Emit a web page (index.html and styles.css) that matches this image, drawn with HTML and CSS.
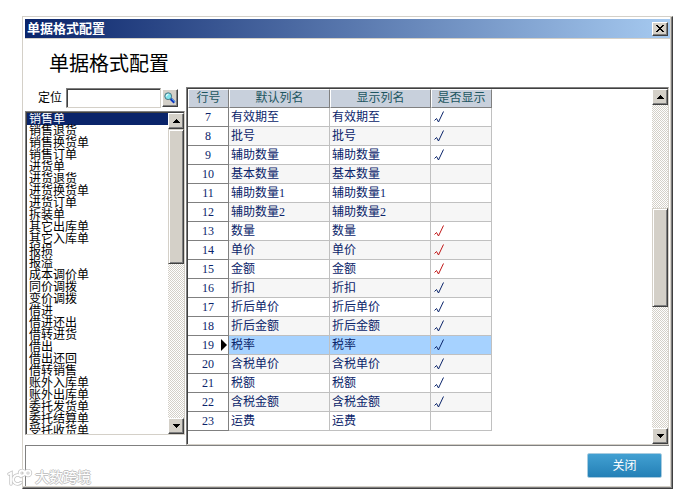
FILE: index.html
```html
<!DOCTYPE html>
<html lang="zh-CN">
<head>
    <meta charset="UTF-8">
    <meta name="viewport" content="width=device-width, initial-scale=1.0">
    <title>单据格式配置</title>
    <link rel="stylesheet" href="styles.css">
</head>
<body>

    <div class="window">
        <div class="titlebar">
            <span class="titlebar-text">单据格式配置</span>
            <button class="btn-3d btn-close" type="button" aria-label="关闭窗口">
                <svg width="8" height="7" viewBox="0 0 8 7" shape-rendering="crispEdges"><path d="M0 0h2v1h1v1h2v-1h1v-1h2v1h-1v1h-1v1h-1v1h1v1h1v1h1v1h-2v-1h-1v-1h-2v1h-1v1h-2v-1h1v-1h1v-1h1v-1h-1v-1h-1v-1h-1z"/></svg>
            </button>
        </div>

        <h1>单据格式配置</h1>

        <div class="content">
            <!-- 单据类型 -->
            <div class="sidebar">
                <div class="search">
                    <label for="locate">定位</label>
                    <input type="text" id="locate">
                    <button class="btn-3d btn-search" type="button" aria-label="查找">
                        <svg width="12" height="12" viewBox="0 0 12 12">
                            <path d="M6.5 6.5l4 4" stroke="#1030c0" stroke-width="2.6"/>
                            <path d="M7.5 6.6l3.6 3.6" stroke="#5ad0f0" stroke-width="0.8"/>
                            <circle cx="4.2" cy="4.2" r="3.4" fill="#7fe4ec" stroke="#4a7480"/>
                            <path d="M2.4 4.4a2 2 0 0 1 2-2" stroke="#fff" fill="none"/>
                        </svg>
                    </button>
                </div>
                <div class="listbox">
                    <ul class="bill-list" role="listbox" tabindex="0" aria-label="单据类型">
                        <li role="option" aria-selected="true">销售单</li>
                        <li role="option">销售退货</li>
                        <li role="option">销售换货单</li>
                        <li role="option">销售订单</li>
                        <li role="option">进货单</li>
                        <li role="option">进货退货</li>
                        <li role="option">进货换货单</li>
                        <li role="option">进货订单</li>
                        <li role="option">拆装单</li>
                        <li role="option">其它出库单</li>
                        <li role="option">其它入库单</li>
                        <li role="option">报损</li>
                        <li role="option">报溢</li>
                        <li role="option">成本调价单</li>
                        <li role="option">同价调拨</li>
                        <li role="option">变价调拨</li>
                        <li role="option">借进</li>
                        <li role="option">借进还出</li>
                        <li role="option">借转进货</li>
                        <li role="option">借出</li>
                        <li role="option">借出还回</li>
                        <li role="option">借转销售</li>
                        <li role="option">账外入库单</li>
                        <li role="option">账外出库单</li>
                        <li role="option">委托发货单</li>
                        <li role="option">委托结算单</li>
                        <li role="option">受托收货单</li>
                    </ul>
                    <div class="scrollbar list-scroll">
                        <button class="btn-3d" type="button" aria-label="向上"><svg width="7" height="4" viewBox="0 0 7 4" shape-rendering="crispEdges"><path d="M3 0h1v1h1v1h1v1h1v1H0V3h1V2h1V1h1z"/></svg></button>
                        <div class="thumb"></div>
                        <div class="space-after"></div>
                        <button class="btn-3d" type="button" aria-label="向下"><svg width="7" height="4" viewBox="0 0 7 4" shape-rendering="crispEdges"><path d="M0 0h7v1H6v1H5v1H4v1H3V3H2V2H1V1H0z"/></svg></button>
                    </div>
                </div>
            </div>

            <!-- 列配置 -->
            <div class="grid-panel">
                <div class="grid-view">
                    <table class="grid">
                        <thead>
                            <tr>
                                <th class="col-num">行号</th>
                                <th class="col-name">默认列名</th>
                                <th class="col-name">显示列名</th>
                                <th class="col-show">是否显示</th>
                            </tr>
                        </thead>
                        <tbody id="rows"></tbody>
                    </table>
                </div>
                <div class="scrollbar grid-scroll">
                    <button class="btn-3d" type="button" aria-label="向上"><svg width="7" height="4" viewBox="0 0 7 4" shape-rendering="crispEdges"><path d="M3 0h1v1h1v1h1v1h1v1H0V3h1V2h1V1h1z"/></svg></button>
                    <div class="space-before"></div>
                    <div class="thumb"></div>
                    <div class="space-after"></div>
                    <button class="btn-3d" type="button" aria-label="向下"><svg width="7" height="4" viewBox="0 0 7 4" shape-rendering="crispEdges"><path d="M0 0h7v1H6v1H5v1H4v1H3V3H2V2H1V1H0z"/></svg></button>
                </div>
            </div>
        </div>

        <div class="footer">
            <button class="btn-primary" type="button">关闭</button>
        </div>
    </div>

    <div class="watermark">
        <svg width="26" height="18" viewBox="0 0 26 18" fill="none" stroke-linecap="round">
            <g stroke="#c4c4c4" stroke-width="3.4">
                <path d="M2 5l2-1v11"/>
                <path d="M14 7.500a4.500 4.500 0 1 0 0 6"/>
                <circle cx="15" cy="4" r="2.500"/>
                <circle cx="21" cy="4" r="2.500"/>
            </g>
            <g stroke="#fff" stroke-width="1.800">
                <path d="M2 5l2-1v11"/>
                <path d="M14 7.500a4.500 4.500 0 1 0 0 6"/>
                <circle cx="15" cy="4" r="2.500"/>
                <circle cx="21" cy="4" r="2.500"/>
            </g>
        </svg>
        <span>大数跨境</span>
    </div>

    <script>
        // 行号, 列名, 是否显示 (required = 必选列)
        const columns = [
            [7, "有效期至", "on"],
            [8, "批号", "on"],
            [9, "辅助数量", "on"],
            [10, "基本数量", ""],
            [11, "辅助数量1", ""],
            [12, "辅助数量2", ""],
            [13, "数量", "required"],
            [14, "单价", "required"],
            [15, "金额", "required"],
            [16, "折扣", "on"],
            [17, "折后单价", "on"],
            [18, "折后金额", "on"],
            [19, "税率", "on"],
            [20, "含税单价", "on"],
            [21, "税额", "on"],
            [22, "含税金额", "on"],
            [23, "运费", ""]
        ];
        const current = 19;

        const rows = document.getElementById("rows");
        columns.forEach(([num, name, state]) => {
            const check = state
                ? `<svg class="check ${state}" width="11" height="12" viewBox="0 0 11 12"><path d="M0.500 9.500l2-2 2 3.500 5-10.500"/></svg>`
                : "";
            rows.insertAdjacentHTML("beforeend", `
                <tr class="${num === current ? "current" : ""}">
                    <th class="row-num" scope="row">${num}</th>
                    <td>${name}</td>
                    <td>${name}</td>
                    <td>${check}</td>
                </tr>
            `);
        });

        // 点击选择单据
        const bills = document.querySelectorAll(".bill-list li");
        bills.forEach(bill => {
            bill.addEventListener("click", () => {
                bills.forEach(b => b.removeAttribute("aria-selected"));
                bill.setAttribute("aria-selected", "true");
            });
        });
    </script>

</body>
</html>
```
FILE: styles.css
```css
* {
    box-sizing: border-box;
}
body {
    margin: 0;
    padding: 16px 4px 3px 22px;
    height: 100vh;
    min-height: 492px;
    display: flex;
    flex-direction: column;
    background-color: #fff;
    font-family: "Liberation Serif", "Noto Sans CJK SC", serif;
    font-size: 12px;
    color: #000;
}
button,
input {
    font: inherit;
    margin: 0;
    padding: 0;
    border-radius: 0;
}
svg {
    display: block;
}
.window {
    flex: 1;
    min-height: 0;
    display: flex;
    flex-direction: column;
    padding: 1px;
    border: 1px solid;
    border-color: #d4d0c8 #404040 #404040 #d4d0c8;
    box-shadow: inset -1px -1px #808080, inset -2px -2px #d4d0c8;
}

/* 标题栏 */
.titlebar {
    display: flex;
    align-items: center;
    justify-content: space-between;
    height: 20px;
    margin: 1px 1px 0;
    padding: 0 2px;
    background: linear-gradient(to right, #0a246a, #a6caf0);
    border-bottom: 1px solid #d4d0c8;
}
.titlebar-text {
    color: #fff;
    font-weight: bold;
    font-size: 13px;
    line-height: 18px;
}
.btn-3d {
    display: flex;
    align-items: center;
    justify-content: center;
    width: 16px;
    height: 16px;
    flex: none;
    background-color: #d4d0c8;
    border: 1px solid;
    border-color: #fff #404040 #404040 #fff;
    box-shadow: inset -1px -1px #808080;
}
.btn-close {
    height: 14px;
}
h1 {
    margin: 0;
    padding: 10px 25px 8px;
    font-size: 20px;
    font-weight: normal;
    line-height: 30px;
}
.content {
    flex: 1;
    min-height: 0;
    display: flex;
    gap: 1px;
    padding: 0 2px 0 1px;
}

.sidebar {
    width: 160px;
    flex: none;
    display: flex;
    flex-direction: column;
    padding-bottom: 10px;
}
.search {
    display: flex;
    align-items: center;
    height: 21px;
    margin-bottom: 3px;
    padding: 0 7px 0 13px;
}
.search label {
    width: 28px;
    line-height: 20px;
}
.search input {
    flex: 1;
    min-width: 0;
    height: 20px;
    background-color: #fff;
    border: 1px solid;
    border-color: #808080 #d4d0c8 #d4d0c8 #808080;
    box-shadow: inset 1px 1px #404040;
    outline: none;
}
.btn-search {
    margin-left: 1px;
    height: 18px;
}
.listbox {
    flex: 1;
    min-height: 0;
    display: flex;
    border: 1px solid;
    border-color: #808080 #d4d0c8 #d4d0c8 #808080;
    box-shadow: inset 1px 1px #404040;
    padding: 1px 0 0 1px;
}
.bill-list {
    flex: 1;
    min-width: 0;
    margin: 0;
    padding: 0;
    list-style: none;
    outline: none;
    overflow: hidden;
}
.bill-list li {
    padding: 0 2px;
    line-height: 12px;
    cursor: default;
}
.bill-list li[aria-selected="true"] {
    color: #fff;
    background-color: #0a246a;
}

/* 滚动条 */
.scrollbar {
    width: 16px;
    flex: none;
    display: flex;
    flex-direction: column;
    background: repeating-conic-gradient(#d4d0c8 0 25%, #fff 0 50%) 0 0 / 2px 2px;
}
.thumb {
    background-color: #d4d0c8;
    border: 1px solid;
    border-color: #d4d0c8 #404040 #404040 #d4d0c8;
    box-shadow: inset 1px 1px #fff, inset -1px -1px #808080;
}
.list-scroll .thumb {
    flex: 133;
}
.list-scroll .space-after {
    flex: 155;
}
.grid-scroll .space-before {
    flex: 103;
}
.grid-scroll .thumb {
    flex: 98;
}
.grid-scroll .space-after {
    flex: 121;
}

.grid-panel {
    flex: 1;
    min-width: 0;
    display: flex;
    border: 1px solid;
    border-color: #808080 #d4d0c8 #d4d0c8 #808080;
    box-shadow: inset 1px 1px #404040;
    padding: 1px 0 0 1px;
}
.grid-view {
    flex: 1;
    min-width: 0;
    overflow: hidden;
}
.grid {
    width: 304px;
    table-layout: fixed;
    border-collapse: separate;
    border-spacing: 0;
    color: #0a246a;
}
.grid th,
.grid td {
    height: 19px;
    padding: 0 2px;
    line-height: 18px;
    font-weight: normal;
    white-space: nowrap;
}
.grid td {
    text-align: left;
    border-right: 1px solid #c0c0c0;
    border-bottom: 1px solid #c0c0c0;
}
.grid thead th {
    background-color: #c8d0dc;
    color: #1c5560;
    border: 1px solid;
    border-color: #fff #808080 #808080 #fff;
    line-height: 17px;
}
.col-num {
    width: 41px;
}
.col-name {
    width: 101px;
}
.col-show {
    width: 61px;
}
.grid .row-num {
    position: relative;
    background-color: #fff;
    border-right: 1px solid #808080;
    border-bottom: 1px solid #808080;
    text-align: center;
}
.grid tbody tr:nth-child(even) td {
    background-color: #f6f6f6;
}
.grid tbody tr.current td {
    background-color: #a6d2ff;
}
.current .row-num::after {
    content: "";
    position: absolute;
    right: 1px;
    top: 3px;
    border: 6px solid transparent;
    border-left-color: #000;
    border-right: none;
}
.check {
    margin-left: 1px;
    fill: none;
    stroke: #0a246a;
}
.check.required {
    stroke: #c01818;
}

.footer {
    display: flex;
    justify-content: flex-end;
    margin: 0 2px 1px 1px;
    padding: 7px 7px 8px;
    border-top: 1px solid #808080;
    border-left: 1px solid #808080;
}
.btn-primary {
    width: 75px;
    height: 25px;
    color: #fff;
    background: linear-gradient(#42a0d2, #2480b6);
    border: 1px solid #a8cce0;
    border-radius: 2px;
    line-height: 20px;
}

.watermark {
    position: absolute;
    left: 7px;
    bottom: 4px;
    display: flex;
    align-items: center;
    gap: 2px;
    font-size: 14px;
    line-height: 20px;
    color: #fff;
    text-shadow: 1px 0 #c4c4c4, -1px 0 #c4c4c4, 0 1px #c4c4c4, 0 -1px #c4c4c4;
}
```
